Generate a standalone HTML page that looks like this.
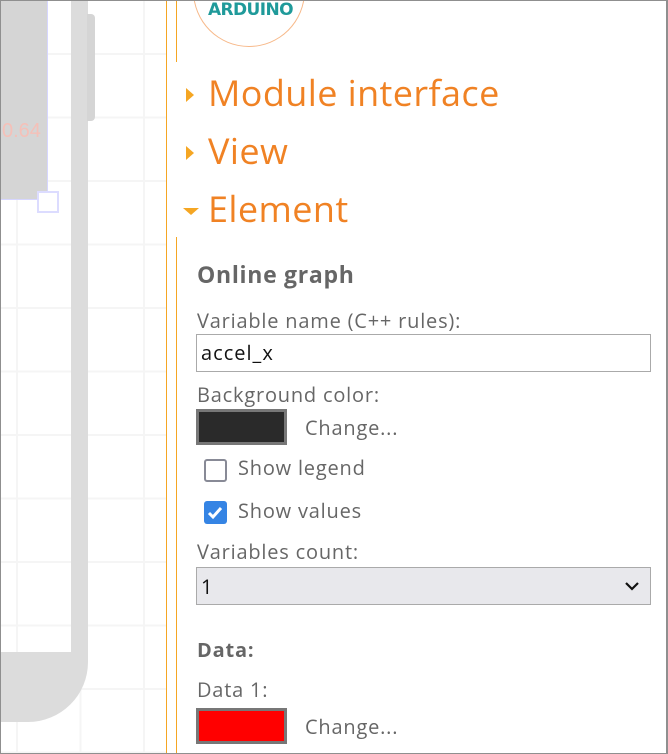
<!DOCTYPE html>
<html><head><meta charset="utf-8"><style>
*{margin:0;padding:0;box-sizing:border-box}
body{width:668px;height:754px;overflow:hidden;background:#fff;position:relative;font-family:"Open Sans","DejaVu Sans","Liberation Sans",sans-serif;color:#666}
.a{position:absolute}
.frame{left:0;top:0;width:668px;height:754px;border:1px solid #8f8f8f;border-right-width:2px;z-index:10;pointer-events:none}
.grid{left:0;top:0;width:166px;height:754px;background-image:linear-gradient(#f5f5f5 2px,transparent 2px),linear-gradient(90deg,#f5f5f5 2px,transparent 2px);background-size:63.5px 63.5px;background-position:16px 53px}
.h{color:#f08224;font-size:36px;left:208px;white-space:nowrap;letter-spacing:0.4px}
.tri{width:0;height:0}
.lbl{font-size:20px;left:197px;white-space:nowrap;letter-spacing:0.8px}
.sw{width:91px;height:36px;border:3px solid #777}
</style></head><body>
<div class="a grid"></div>
<div class="a" style="left:0;top:0;width:48px;height:200px;background:#d5d5d5;border-right:1px solid #d6d6ff;border-bottom:1px solid #d6d6ff"></div>
<div class="a" style="left:2px;top:120px;font-size:20px;color:#f5c0b8;font-family:'Liberation Sans',sans-serif">0.64</div>
<div class="a" style="left:37px;top:191px;width:22px;height:22px;border:2px solid #dcdcff;background:#fff"></div>
<div class="a" style="left:71px;top:0;width:17px;height:652px;background:#dcdcdc"></div>
<div class="a" style="left:87px;top:14px;width:8px;height:107px;background:#d5d5d5;border-radius:0 4px 4px 0"></div>
<div class="a" style="left:0;top:652px;width:88px;height:70px;background:#dcdcdc;border-radius:0 0 60px 0"></div>
<div class="a" style="left:166px;top:0;width:1px;height:754px;background:#f5a623"></div>
<div class="a" style="left:176px;top:0;width:1px;height:62px;background:#f5a623"></div>
<div class="a" style="left:176px;top:237px;width:1px;height:517px;background:#f5a623"></div>
<div class="a" style="left:193px;top:-35px;width:112px;height:82px;border:1px solid #f7b98a;border-radius:0 0 56px 56px;border-top:none;background:#fff"></div>
<div class="a" style="left:208px;top:0px;font-size:17px;font-weight:bold;color:#1f9a9a;font-family:'DejaVu Sans',sans-serif;letter-spacing:-0.6px">ARDUINO</div>
<div class="a tri" style="left:186px;top:88px;border-left:8px solid #f5a623;border-top:7px solid transparent;border-bottom:7px solid transparent"></div>
<div class="a h" style="top:68px">Module interface</div>
<div class="a tri" style="left:186px;top:146px;border-left:8px solid #f5a623;border-top:7px solid transparent;border-bottom:7px solid transparent"></div>
<div class="a h" style="top:126px">View</div>
<div class="a tri" style="left:183px;top:208px;border-top:7px solid #f5a623;border-left:8px solid transparent;border-right:8px solid transparent"></div>
<div class="a h" style="top:184px">Element</div>
<div class="a" style="left:197px;top:258px;font-size:23px;font-weight:bold;letter-spacing:0.7px">Online graph</div>
<div class="a lbl" style="top:307px">Variable name (C++ rules):</div>
<div class="a" style="left:196px;top:334px;width:455px;height:38px;border:1px solid #aaa;font-size:20px;letter-spacing:1px;color:#111;padding:4px 4px">accel_x</div>
<div class="a lbl" style="top:381px">Background color:</div>
<div class="a sw" style="left:196px;top:409px;background:#2a2a2a"></div>
<div class="a lbl" style="left:305px;top:414px">Change...</div>
<div class="a" style="left:204px;top:459px;width:23px;height:23px;border:2px solid #888a96;border-radius:3px"></div>
<div class="a lbl" style="left:238px;top:454px">Show legend</div>
<div class="a" style="left:204px;top:501px;width:23px;height:23px;background:#3584e4;border-radius:3px"><svg width="23" height="23" viewBox="0 0 23 23"><path d="M5 12l4 4 8-9" stroke="#fff" stroke-width="3" fill="none"/></svg></div>
<div class="a lbl" style="left:238px;top:497px">Show values</div>
<div class="a lbl" style="top:538px">Variables count:</div>
<div class="a" style="left:196px;top:567px;width:455px;height:38px;background:#e8e8ec;border:1px solid #aaa;font-size:20px;color:#111;padding:5px 4px">1</div>
<svg class="a" style="left:623px;top:578px" width="18" height="16" viewBox="0 0 18 16"><path d="M3 5l6 6 6-6" stroke="#111" stroke-width="2.2" fill="none"/></svg>
<div class="a" style="left:197px;top:636px;font-size:20px;font-weight:bold;letter-spacing:0.8px">Data:</div>
<div class="a lbl" style="top:676px">Data 1:</div>
<div class="a sw" style="left:196px;top:708px;background:#f00"></div>
<div class="a lbl" style="left:305px;top:713px">Change...</div>
<div class="a frame"></div>
</body></html>
